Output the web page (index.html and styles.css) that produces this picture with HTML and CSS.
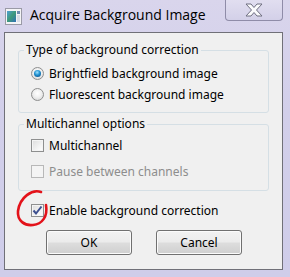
FILE: index.html
```html
<!doctype html>
<html lang="en">
<head>
    <meta charset="UTF-8">
    <title>Acquire Background Image</title>
    <link rel="stylesheet" href="styles.css">
</head>
<body>
    <div class="window">
        <div class="titlebar">
            <svg class="app-icon" width="17" height="17" viewBox="0 0 17 17">
                <defs>
                    <linearGradient id="pic" x1="0" y1="0" x2="1" y2="1">
                        <stop offset="0" stop-color="#4f9fd6"/>
                        <stop offset="0.5" stop-color="#3f9a7a"/>
                        <stop offset="1" stop-color="#2f6fb8"/>
                    </linearGradient>
                </defs>
                <rect x="0.5" y="0.5" width="16" height="16" fill="#f4f4f6" stroke="#9a9aa6"/>
                <rect x="2" y="3" width="9" height="11" fill="url(#pic)"/>
                <rect x="12" y="3" width="3" height="3" fill="#6d8bb0"/>
                <rect x="12" y="7" width="3" height="7" fill="#d9dde6"/>
            </svg>
            <span class="title">Acquire Background Image</span>
            <div class="close-btn">
                <svg width="22" height="14" viewBox="0 0 22 14">
                    <path d="M3 1 L8 1 L11 4.5 L14 1 L19 1 L13.5 7 L19 13 L14 13 L11 9.5 L8 13 L3 13 L8.5 7 Z" fill="#fbfbfd" stroke="#6f6f80" stroke-width="1"/>
                </svg>
            </div>
        </div>
        <div class="client">
            <fieldset class="group group-type">
                <legend>Type of background correction</legend>
                <div class="option">
                    <span class="radio checked"></span>
                    <span>Brightfield background image</span>
                </div>
                <div class="option">
                    <span class="radio"></span>
                    <span>Fluorescent background image</span>
                </div>
            </fieldset>
            <fieldset class="group group-multi">
                <legend>Multichannel options</legend>
                <div class="option">
                    <span class="check"></span>
                    <span>Multichannel</span>
                </div>
                <div class="option disabled">
                    <span class="check"></span>
                    <span>Pause between channels</span>
                </div>
            </fieldset>
            <div class="option enable">
                <span class="check checked">
                    <svg width="11" height="11" viewBox="0 0 11 11">
                        <path d="M1.5 5.5 L4 8.5 L9.5 1.5" fill="none" stroke="#3c4f8f" stroke-width="2"/>
                    </svg>
                </span>
                <span>Enable background correction</span>
            </div>
            <div class="buttons">
                <div class="button">OK</div>
                <div class="button">Cancel</div>
            </div>
        </div>
    </div>
    <svg class="scribble" width="60" height="50" viewBox="0 0 60 50">
        <path d="M37 4 C28 1, 16 9, 14 23 C13 33, 21 38, 29 37 C38 36, 44 29, 42 17" fill="none" stroke="#e3121a" stroke-width="2.6" stroke-linecap="round"/>
    </svg>
</body>
</html>
```

FILE: styles.css
```css
html , body
{
    margin : 0px ;
    padding : 0px ;
    width : 100% ;
    height : 100% ;
}
body
{
    font-family : "Noto Sans", "Open Sans", sans-serif ;
    font-size : 12px ;
    color : #000 ;
    position : relative ;
}
.window
{
    width : 290px ;
    height : 277px ;
    box-sizing : border-box ;
    background : linear-gradient(to bottom, #d9d5ec 0%, #d2cfea 40%, #cfcdea 100%) ;
    padding : 0px 7px 7px 4px ;
}
.titlebar
{
    height : 32px ;
    display : flex ;
    align-items : flex-start ;
}
.app-icon
{
    margin : 8px 0px 0px 1px ;
}
.title
{
    margin : 5px 0px 0px 8px ;
    font-family : "Open Sans", "Noto Sans", sans-serif ;
    font-size : 14px ;
    color : #000 ;
    flex : 1 ;
}
.close-btn
{
    width : 58px ;
    height : 21px ;
    box-sizing : border-box ;
    border : 1px solid #8f8ca8 ;
    border-top : none ;
    border-radius : 0px 0px 4px 4px ;
    background : linear-gradient(to bottom, #e1def0, #d3d0e8) ;
    display : flex ;
    align-items : center ;
    justify-content : center ;
}
.client
{
    height : 238px ;
    box-sizing : border-box ;
    background : #f0f0f0 ;
    border : 1px solid #707078 ;
    padding : 9px 13px 0px 13px ;
}
.group
{
    margin : 0px ;
    border : 1px solid #d5dfe5 ;
    border-radius : 3px ;
    padding : 0px ;
    min-width : 0 ;
    box-sizing : border-box ;
}
.group legend
{
    padding : 0px 2px ;
    margin-left : 5px ;
    line-height : 16px ;
}
.group .option
{
    padding-left : 12px ;
}
.group-type
{
    height : 71px ;
    padding-top : 5px ;
}
.group-multi
{
    margin-top : 3px ;
    height : 75px ;
}
.option
{
    display : flex ;
    align-items : center ;
    height : 21px ;
}
.group-multi .option
{
    height : 26px ;
}
.option.disabled
{
    color : #8d8d8d ;
}
.radio
{
    width : 13px ;
    height : 13px ;
    box-sizing : border-box ;
    border-radius : 50% ;
    border : 1px solid #8e8f8f ;
    background : radial-gradient(circle at 50% 40%, #ffffff 0%, #f0f0f0 45%, #cfcfcf 100%) ;
    margin-right : 5px ;
    position : relative ;
}
.radio.checked:after
{
    content : "" ;
    position : absolute ;
    left : 2px ;
    top : 2px ;
    width : 7px ;
    height : 7px ;
    border-radius : 50% ;
    background : radial-gradient(circle at 45% 35%, #9fe2ff 0%, #1d8fd0 45%, #0a3f73 100%) ;
}
.check
{
    width : 13px ;
    height : 13px ;
    box-sizing : border-box ;
    border : 1px solid #8e8f8f ;
    background : linear-gradient(135deg, #dcdcdc 0%, #f6f6f6 70%, #ffffff 100%) ;
    box-shadow : inset 0px 0px 0px 1px #f4f4f4 ;
    margin-right : 5px ;
    display : flex ;
    align-items : center ;
    justify-content : center ;
}
.option.disabled .check
{
    border-color : #b8b8b8 ;
    background : #f4f4f4 ;
}
.enable
{
    margin : 11px 0px 0px 13px ;
    height : 16px ;
}
/* hand drawn red ring round the checkbox, drawn over the dialog */
.scribble
{
    position : absolute ;
    left : 4px ;
    top : 188px ;
    z-index : 100 ;
}
.buttons
{
    display : flex ;
    gap : 24px ;
    margin : 12px 0px 0px 28px ;
}
.button
{
    width : 86px ;
    height : 25px ;
    box-sizing : border-box ;
    border : 1px solid #707070 ;
    border-radius : 3px ;
    background : linear-gradient(to bottom, #f2f2f2 0%, #ebebeb 48%, #dddddd 52%, #cfcfcf 100%) ;
    box-shadow : inset 0px 0px 0px 1px #fbfbfb ;
    display : flex ;
    align-items : center ;
    justify-content : center ;
}
```
